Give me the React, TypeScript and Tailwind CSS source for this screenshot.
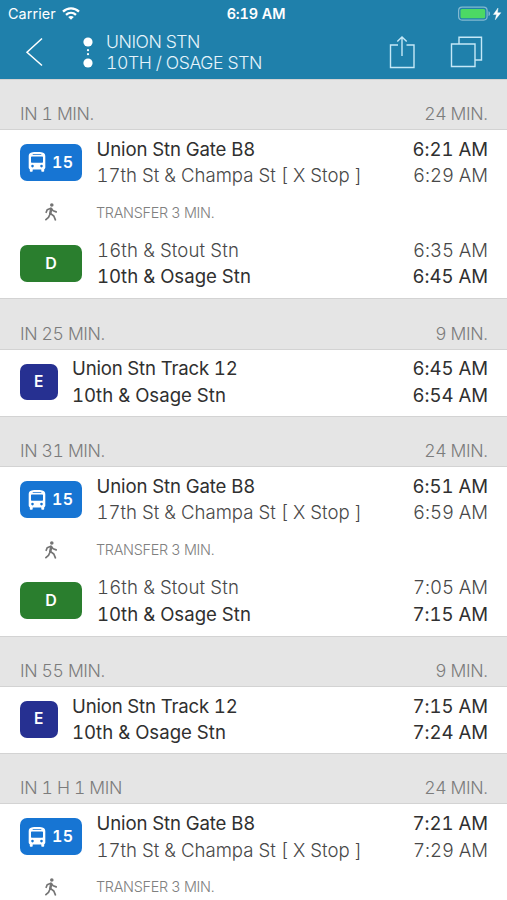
type Trip = { wait: string; duration: string; kind: "transfer" | "direct"; times: string[] };

const trips: Trip[] = [
  { wait: "IN 1 MIN.", duration: "24 MIN.", kind: "transfer", times: ["6:21 AM", "6:29 AM", "6:35 AM", "6:45 AM"] },
  { wait: "IN 25 MIN.", duration: "9 MIN.", kind: "direct", times: ["6:45 AM", "6:54 AM"] },
  { wait: "IN 31 MIN.", duration: "24 MIN.", kind: "transfer", times: ["6:51 AM", "6:59 AM", "7:05 AM", "7:15 AM"] },
  { wait: "IN 55 MIN.", duration: "9 MIN.", kind: "direct", times: ["7:15 AM", "7:24 AM"] },
  { wait: "IN 1 H 1 MIN", duration: "24 MIN.", kind: "transfer", times: ["7:21 AM", "7:29 AM"] },
];

function BusIcon() {
  return (
    <svg width="18" height="20" viewBox="0 0 18 20" fill="#fff" fillRule="evenodd">
      <path d="M3.6.6C5 .1 7 0 9 0s4 .1 5.400.6C16.400 1.200 17.300 2.400 17.300 4.200V15.500c0 .8-.5 1.400-1.100 1.700v1.500c0 .7-.4 1.100-1.100 1.100h-.7c-.7 0-1.100-.4-1.100-1.100v-1.200H4.700v1.200c0 .7-.4 1.100-1.100 1.100h-.7c-.7 0-1.100-.4-1.100-1.100v-1.500C1.200 16.900.7 16.300.7 15.500V4.200C.7 2.400 1.600 1.200 3.600.6zM4.700 2.300v.6h8.600v-.6zM4 4.600c-.6 0-1 .4-1 1v4.100c0 .6.4 1 1 1h10c.6 0 1-.4 1-1V5.600c0-.6-.4-1-1-1zM4.500 12.800a1.300 1.300 0 1 0 0 2.600 1.300 1.300 0 0 0 0-2.600zM13.500 12.800a1.300 1.300 0 1 0 0 2.600 1.300 1.300 0 0 0 0-2.600z" />
    </svg>
  );
}

function WalkIcon() {
  return (
    <svg width="14" height="18" viewBox="0 0 14 18" fill="none" stroke="#747474" strokeWidth="1.700" strokeLinecap="round" strokeLinejoin="round">
      <circle cx="7.800" cy="2" r="1.800" fill="#747474" stroke="none" />
      <path d="M7.200 6 6.200 10.800" strokeWidth="2.500" />
      <path d="M6.600 10.600 9.800 13l1.600 3.800M5.600 12l-1.100 2.400L1.900 16.600M2.200 9.300l1-2.500L6.900 5.200l2.300 2.600 3 1.100" />
    </svg>
  );
}

function StopRow({ name, time, end, spacing = "" }: { name: string; time: string; end?: boolean; spacing?: string }) {
  return (
    <div className={`flex h-[26.6px] items-center justify-between whitespace-nowrap text-[18.6px] ${end ? "font-[370] text-[#303030]" : "font-light text-[#484848]"}`}>
      <span className={spacing}>{name}</span>
      <span className="tracking-[-0.05px]">{time}</span>
    </div>
  );
}

function TransferTrip({ times }: { times: string[] }) {
  return (
    <div className="bg-white pl-5 pr-[19px] pt-[6.4px]">
      <div className="flex">
        <div className="mt-[7.6px] flex h-[36.8px] w-[62px] shrink-0 items-center rounded-[7px] bg-[#1775d3] pl-[8px] text-[16px] font-semibold tracking-[0.3px] text-white">
          <BusIcon />
          <span className="ml-[6px] pb-[1px]">15</span>
        </div>
        <div className="ml-[14.5px] grow">
          <StopRow name="Union Stn Gate B8" time={times[0]} end spacing="tracking-[-0.12px]" />
          <StopRow name="17th St & Champa St [ X Stop ]" time={times[1]} />
        </div>
      </div>
      <div className="flex h-[48px] items-center pb-[2px]">
        <div className="flex w-[62px] shrink-0 justify-center">
          <WalkIcon />
        </div>
        <span className="ml-[14px] text-[14.4px] font-light tracking-[-0.3px] text-[#808080]">TRANSFER 3 MIN.</span>
      </div>
      {times.length > 2 && (
        <div className="flex h-[61px]">
          <div className="mt-[7.6px] flex h-[36.8px] w-[62px] shrink-0 items-center justify-center rounded-[7px] bg-[#2a7e2e] pb-[1px] text-[16px] font-semibold text-white">D</div>
          <div className="ml-[15px] grow">
            <StopRow name="16th & Stout Stn" time={times[2]} spacing="tracking-[0.12px]" />
            <StopRow name="10th & Osage Stn" time={times[3]} end />
          </div>
        </div>
      )}
    </div>
  );
}

function DirectTrip({ times }: { times: string[] }) {
  return (
    <div className="flex h-[66.3px] bg-white pl-5 pr-[19px] pt-[6.4px]">
      <div className="mt-[7.6px] flex h-[36.8px] w-[37.5px] shrink-0 items-center justify-center rounded-[7px] bg-[#263091] pb-[1px] text-[15.5px] font-semibold text-white">E</div>
      <div className="ml-[14.5px] grow">
        <StopRow name="Union Stn Track 12" time={times[0]} end spacing="tracking-[-0.18px]" />
        <StopRow name="10th & Osage Stn" time={times[1]} end />
      </div>
    </div>
  );
}

export default function App() {
  return (
    <div className="h-[900px] w-[507px] overflow-hidden bg-white font-['Inter','Liberation_Sans',sans-serif] tabular-nums">
      <header className="h-[78.7px] bg-[#1f80ab] text-white">
        <div className="grid h-[27px] grid-cols-3 items-center pl-[8px] pr-[5px]">
          <div className="flex items-center text-[14.4px]">
            <span className="tracking-[0.1px]">Carrier</span>
            <svg className="ml-[6px]" width="18" height="13" viewBox="0 0 18 13" fill="none" stroke="#fff" strokeWidth="2.300">
              <path d="M1 4.600C5.500.3 12.500.3 17 4.600M4 7.900c2.900-2.700 7.100-2.700 10 0" />
              <path d="M9 12.800 6.200 10c1.600-1.300 4-1.300 5.600 0z" fill="#fff" stroke="none" />
            </svg>
          </div>
          <span className="pl-[2px] text-center text-[14.4px] font-semibold tracking-[-0.1px]">6:19 AM</span>
          <div className="flex items-center justify-end">
            <svg width="44" height="16" viewBox="0 0 44 16">
              <rect x=".6" y="1.100" width="28.500" height="13" rx="3.500" fill="none" stroke="#83b9d1" strokeWidth="1.200" />
              <rect x="2.500" y="3" width="24.700" height="9.200" rx="1.500" fill="#4cd964" />
              <path d="M30.500 5.200c2 .5 2 4.300 0 4.800z" fill="#83b9d1" />
              <path d="M40 2 35.400 8.500h3.100l-1.200 5.300 5.600-7.100h-3.400z" fill="#fff" stroke="#fff" strokeWidth=".4" />
            </svg>
          </div>
        </div>
        <div className="flex h-[51.7px]">
          <svg className="ml-[25px] mt-[10px]" width="18" height="30" viewBox="0 0 18 30" fill="none" stroke="#fff" strokeWidth="1.500">
            <path d="M17 1.500 2 15.200 17 28.500" />
          </svg>
          <svg className="ml-[39px] mt-[9px]" width="12" height="33" viewBox="0 0 12 33" fill="#fff">
            <circle cx="6" cy="6" r="4.600" />
            <circle cx="6" cy="14.200" r="1.100" />
            <circle cx="6" cy="18.200" r="1.100" />
            <circle cx="6" cy="27" r="4.600" />
          </svg>
          <div className="ml-[12px] mt-[4px] grow whitespace-nowrap text-[17.6px] font-light leading-[21px] text-[#e6f4fb]">
            <div className="tracking-[-0.45px]">UNION STN</div>
            <div className="tracking-[-0.4px]">10TH / OSAGE STN</div>
          </div>
          <svg className="mr-[35px] mt-[8px]" width="26" height="34" viewBox="0 0 26 34" fill="none" stroke="#c5e8f7" strokeWidth="1.400">
            <path d="M9 10H1.500v22.500h23.500V10H17.500M13 21V2M8.300 6.500 13 2l4.700 4.500" />
          </svg>
          <svg className="mr-[24px] mt-[8px]" width="33" height="33" viewBox="0 0 33 33" fill="none" stroke="#c5e8f7" strokeWidth="1.400">
            <path d="M1.500 9h23.500v22.500H1.500zM9 9V2.200h22.500V25H25" />
          </svg>
        </div>
      </header>
      {trips.map((trip) => (
        <section key={trip.wait}>
          <div className="flex h-[51.2px] items-end justify-between border-b border-t border-[#d3d3d3] bg-[#e5e5e5] pb-[1.5px] pl-5 pr-[19.500px] text-[17.6px] font-light tracking-[-0.38px] text-[#7c7c7c]">
            <span>{trip.wait}</span>
            <span>{trip.duration}</span>
          </div>
          {trip.kind === "transfer" ? <TransferTrip times={trip.times} /> : <DirectTrip times={trip.times} />}
        </section>
      ))}
    </div>
  );
}
